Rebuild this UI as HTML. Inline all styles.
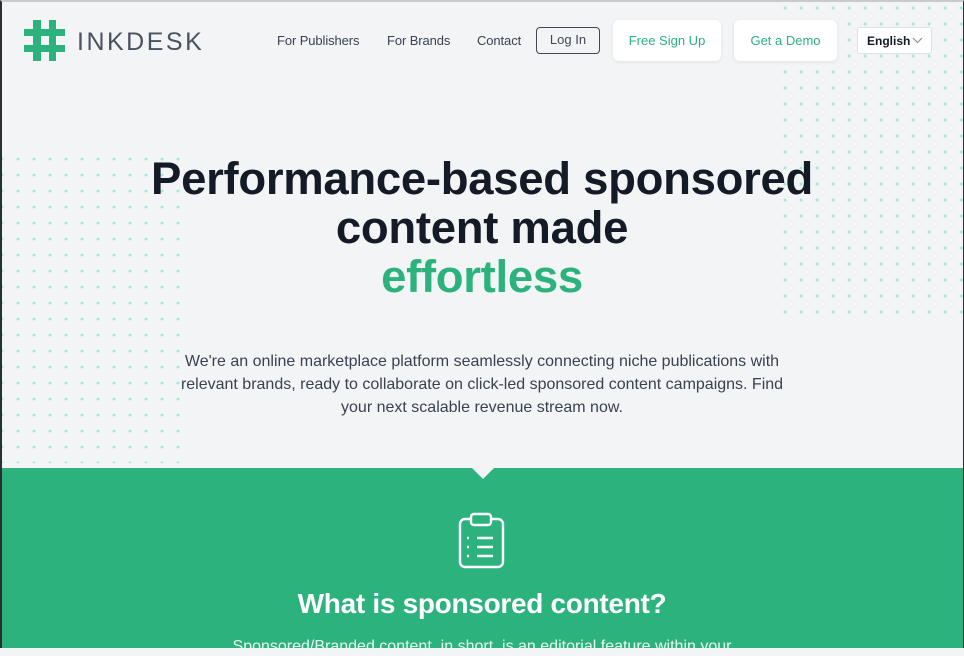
<!DOCTYPE html>
<html><head><meta charset="utf-8"><style>
*{margin:0;padding:0;box-sizing:border-box}
body{width:964px;height:648px;overflow:hidden;background:#f3f4f6;font-family:"Liberation Sans",sans-serif;position:relative}
.frame{position:absolute;inset:0;border-top:2px solid #c8cacd;border-left:2px solid #2a2f36;border-right:1px solid #2a2f36;pointer-events:none;z-index:10}
.dots{position:absolute;background-image:radial-gradient(circle,#a6e9d1 1.3px,transparent 1.7px);background-size:16px 16px}
.nav a{position:absolute;font-size:13px;color:#3a4250;top:33px;text-decoration:none;letter-spacing:-0.1px}
.btn{position:absolute;background:#fff;border-radius:6px;box-shadow:0 1px 4px rgba(0,0,0,.08);color:#2bb27d;font-size:13px;text-align:center}
h1{position:absolute;top:154px;left:0;width:964px;text-align:center;font-size:45.5px;line-height:49px;color:#141a26;letter-spacing:-0.3px;font-weight:bold}
h1 span{color:#2bb27d}
p.lead{position:absolute;top:350px;left:170px;width:624px;text-align:center;font-size:16px;line-height:23px;color:#3a4150}
.green{position:absolute;top:468px;left:0;width:964px;height:180px;background:#2bb27d}
.tri{position:absolute;top:468px;left:472px;width:0;height:0;border-left:11px solid transparent;border-right:11px solid transparent;border-top:11px solid #f3f4f6}
h2{position:absolute;top:588px;width:964px;text-align:center;color:#fff;font-size:28px;font-weight:bold;letter-spacing:-0.3px}
.sub{position:absolute;top:638px;width:964px;text-align:center;color:#e8f7f0;font-size:16px}
</style></head><body>
<div class="frame"></div>
<div class="dots" style="left:-6px;top:151px;width:192px;height:312px"></div>
<div class="dots" style="left:777px;top:0px;width:192px;height:320px"></div>

<svg style="position:absolute;left:24px;top:20px" width="41" height="41" viewBox="0 0 41 41">
<rect x="9" y="0" width="8" height="41" fill="#2bb27d"/><rect x="25" y="0" width="7" height="41" fill="#2bb27d"/>
<rect x="0" y="9" width="41" height="7" fill="#2bb27d"/><rect x="0" y="25" width="41" height="7" fill="#2bb27d"/>
</svg>
<div style="position:absolute;left:77px;top:28px;font-size:25px;color:#4a5360;letter-spacing:2.5px">INKDESK</div>

<div class="nav"><a style="left:277px">For Publishers</a><a style="left:387px">For Brands</a><a style="left:477px">Contact</a></div>
<div style="position:absolute;left:536px;top:27px;width:64px;height:27px;border:1.5px solid #3f4754;border-radius:4px;font-size:13px;color:#3f4754;text-align:center;line-height:24px">Log In</div>
<div class="btn" style="left:613px;top:20px;width:108px;height:41px;line-height:41px">Free Sign Up</div>
<div class="btn" style="left:734px;top:20px;width:103px;height:41px;line-height:41px">Get a Demo</div>
<div style="position:absolute;left:857px;top:27px;width:75px;height:27px;background:#fff;border:1px solid #dfe1e4;border-radius:3px;font-size:12px;font-weight:bold;color:#141a26;line-height:26px;padding-left:9px">English
<svg style="position:absolute;right:8px;top:9px" width="11" height="7" viewBox="0 0 11 7"><path d="M1 1l4.5 4.5L10 1" stroke="#8a9099" stroke-width="1.2" fill="none"/></svg></div>

<h1>Performance-based sponsored<br>content made<br><span>effortless</span></h1>
<p class="lead">We're an online marketplace platform seamlessly connecting niche publications with relevant brands, ready to collaborate on click-led sponsored content campaigns. Find your next scalable revenue stream now.</p>

<div class="green"></div>
<div class="tri"></div>
<svg style="position:absolute;left:458px;top:512px" width="48" height="58" viewBox="0 0 48 58">
<rect x="2" y="7" width="43" height="48" rx="5" fill="none" stroke="#fff" stroke-width="2.4"/>
<rect x="13" y="2" width="20" height="11" rx="3" fill="#2bb27d" stroke="#fff" stroke-width="2.4"/>
<g stroke="#fff" stroke-width="2.4"><path d="M19 26h16M19 35h16M19 44h16M9 26h2M9 35h2M9 44h2"/></g>
</svg>
<h2>What is sponsored content?</h2>
<div class="sub">Sponsored/Branded content, in short, is an editorial feature within your</div>
</body></html>
